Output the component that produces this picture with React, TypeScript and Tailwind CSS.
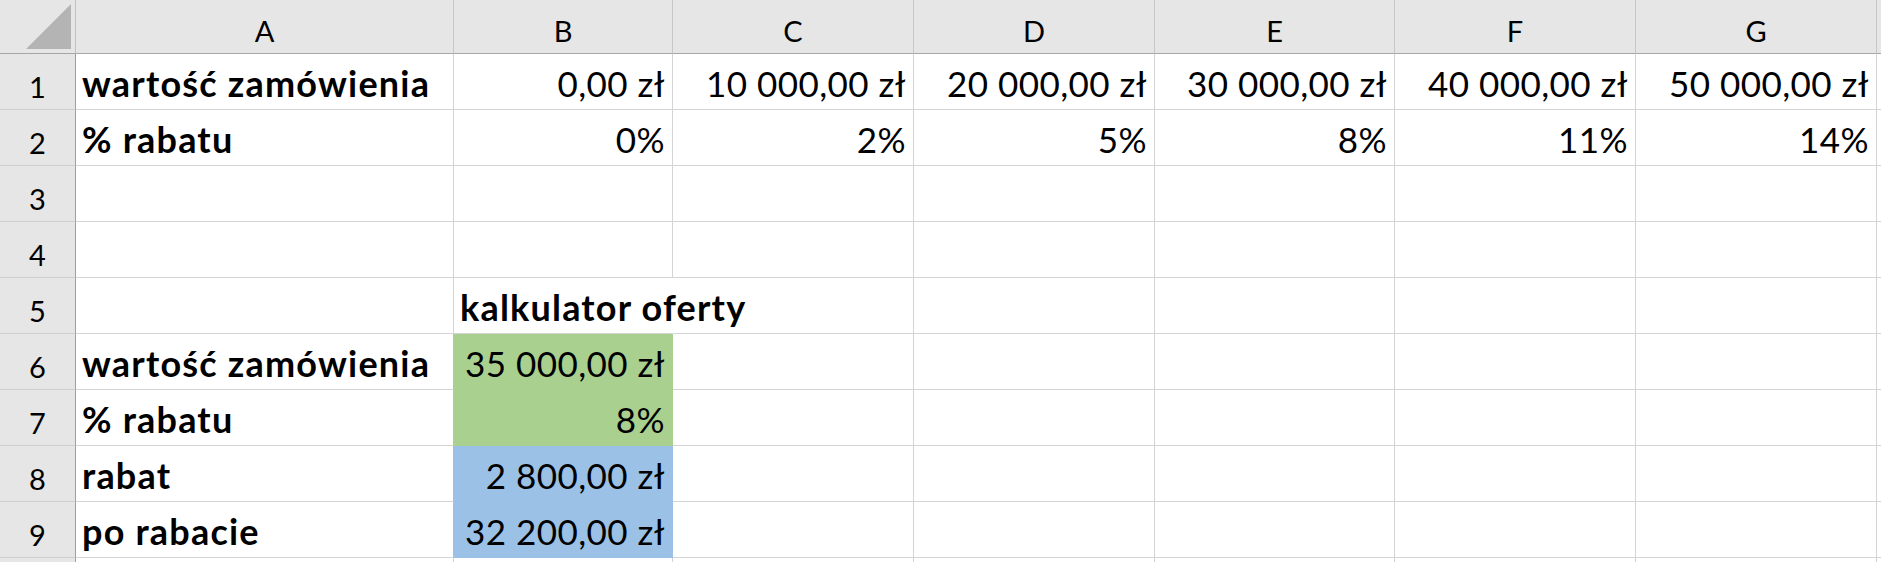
import React from 'react';

type Cell = {
  v?: string;
  bold?: boolean;
  right?: boolean;
  fill?: 'green' | 'blue';
  spill?: boolean;
};

const COLS = ['A', 'B', 'C', 'D', 'E', 'F', 'G'];

const ROWS: Cell[][] = [
  [
    { v: 'wartość zamówienia', bold: true },
    { v: '0,00 zł', right: true },
    { v: '10 000,00 zł', right: true },
    { v: '20 000,00 zł', right: true },
    { v: '30 000,00 zł', right: true },
    { v: '40 000,00 zł', right: true },
    { v: '50 000,00 zł', right: true },
  ],
  [
    { v: '% rabatu', bold: true },
    { v: '0%', right: true },
    { v: '2%', right: true },
    { v: '5%', right: true },
    { v: '8%', right: true },
    { v: '11%', right: true },
    { v: '14%', right: true },
  ],
  [],
  [],
  [{}, { v: 'kalkulator oferty', bold: true, spill: true }],
  [{ v: 'wartość zamówienia', bold: true }, { v: '35 000,00 zł', right: true, fill: 'green' }],
  [{ v: '% rabatu', bold: true }, { v: '8%', right: true, fill: 'green' }],
  [{ v: 'rabat', bold: true }, { v: '2 800,00 zł', right: true, fill: 'blue' }],
  [{ v: 'po rabacie', bold: true }, { v: '32 200,00 zł', right: true, fill: 'blue' }],
];

const fillClass = (fill?: 'green' | 'blue') => {
  if (fill === 'green') return 'bg-[#a9d08e] border-r-[#a9d08e] border-b-[#a9d08e]';
  if (fill === 'blue') return 'bg-[#9bc2e6] border-r-[#9bc2e6] border-b-[#9bc2e6]';
  return 'border-r-[#d4d4d4] border-b-[#d4d4d4]';
};

const App: React.FC = () => {
  return (
    <div
      className="h-[562px] w-[1881px] overflow-hidden bg-white text-black"
      style={{ fontFamily: 'Lato, "Open Sans", sans-serif' }}
    >
      <div className="grid grid-cols-[76px_378px_219px_241px_241px_240px_241px_241px_1fr] grid-rows-[54px_repeat(10,56px)]">
        {/* corner */}
        <div className="flex items-end justify-end border-b border-r border-b-[#a6a6a6] border-r-[#c0c0c0] bg-[#e6e6e6] pb-[3px] pr-[3px]">
          <svg width="46" height="46" viewBox="0 0 46 46">
            <polygon points="45,0 45,45 0,45" fill="#b4b4b4" />
          </svg>
        </div>
        {COLS.map(c => (
          <div
            key={c}
            className="flex items-end justify-center border-b border-r border-b-[#a6a6a6] border-r-[#c6c6c6] bg-[#e6e6e6] pb-[4px] text-[29px] leading-[36px]"
          >
            {c}
          </div>
        ))}
        <div className="border-b border-b-[#a6a6a6] bg-[#e6e6e6]" />

        {ROWS.map((row, r) => (
          <React.Fragment key={r}>
            <div className="flex items-end justify-center border-b border-r border-b-[#cfcfcf] border-r-[#9e9e9e] bg-[#e6e6e6] pb-[4px] text-[29px] leading-[36px]">
              {r + 1}
            </div>
            {COLS.map((c, i) => {
              const cell = row[i] || {};
              const next = row[i + 1];
              let borders = fillClass(cell.fill);
              if (next?.fill && !cell.fill) {
                borders = next.fill === 'green'
                  ? 'border-r-[#a9d08e] border-b-[#d4d4d4]'
                  : 'border-r-[#9bc2e6] border-b-[#d4d4d4]';
              }
              if (cell.spill) borders = 'border-r-white border-b-[#d4d4d4]';
              return (
                <div
                  key={c}
                  className={`relative flex items-end whitespace-nowrap border-b border-r ${borders} ${
                    cell.right
                      ? 'justify-end pb-[6px] pr-[7px] text-[35px] leading-[40px] tracking-[0.45px]'
                      : 'justify-start pb-[6px] pl-[6px] text-[36px] leading-[40px] tracking-[1.2px]'
                  } ${cell.bold ? 'font-bold' : 'font-normal'} ${cell.spill ? 'z-10 overflow-visible' : 'overflow-hidden'}`}
                >
                  {cell.v}
                </div>
              );
            })}
            <div className="border-b border-b-[#d4d4d4]" />
          </React.Fragment>
        ))}

        {/* row 10, only its top edge is on screen */}
        <div className="border-r border-r-[#9e9e9e] bg-[#e6e6e6]" />
        {COLS.map(c => (
          <div key={c} className="border-r border-r-[#d4d4d4]" />
        ))}
        <div />
      </div>
    </div>
  );
};

export default App;
